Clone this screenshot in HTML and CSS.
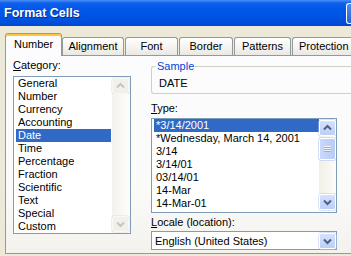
FILE: index.html
```html
<!DOCTYPE html>
<html>
<head>
<meta charset="utf-8">
<link rel="stylesheet" href="styles.css">
</head>
<body>
<div class="titlebar">
  <span class="title">Format Cells</span>
  <span class="tbtn"></span>
</div>
<div class="tabs">
  <div class="tab active" style="width:57px">Number</div>
  <div class="tab" style="width:62px">Alignment</div>
  <div class="tab" style="width:53px">Font</div>
  <div class="tab" style="width:54px">Border</div>
  <div class="tab" style="width:57px">Patterns</div>
  <div class="tab last" style="width:59px">Protection</div>
</div>
<div class="panel">
  <div class="col-left">
    <div class="label"><u>C</u>ategory:</div>
    <div class="list cat-list">
      <div class="items">
        <div class="item">General</div>
        <div class="item">Number</div>
        <div class="item">Currency</div>
        <div class="item">Accounting</div>
        <div class="item sel">Date</div>
        <div class="item">Time</div>
        <div class="item">Percentage</div>
        <div class="item">Fraction</div>
        <div class="item">Scientific</div>
        <div class="item">Text</div>
        <div class="item">Special</div>
        <div class="item">Custom</div>
      </div>
      <div class="sbar disabled">
        <div class="sbtn"><svg viewBox="0 0 17 16" width="17" height="16"><polyline points="5,9.5 8.5,6 12,9.5" fill="none" stroke="#C8C6B8" stroke-width="2"/></svg></div>
        <div class="strack"></div>
        <div class="sbtn"><svg viewBox="0 0 17 16" width="17" height="16"><polyline points="5,6.5 8.5,10 12,6.5" fill="none" stroke="#C8C6B8" stroke-width="2"/></svg></div>
      </div>
    </div>
  </div>
  <div class="col-right">
    <fieldset class="sample">
      <legend>Sample</legend>
      <div class="sample-val">DATE</div>
    </fieldset>
    <div class="label type-label"><u>T</u>ype:</div>
    <div class="list type-list">
      <div class="items">
        <div class="item sel">*3/14/2001</div>
        <div class="item">*Wednesday, March 14, 2001</div>
        <div class="item">3/14</div>
        <div class="item">3/14/01</div>
        <div class="item">03/14/01</div>
        <div class="item">14-Mar</div>
        <div class="item">14-Mar-01</div>
      </div>
      <div class="sbar">
        <div class="sbtn"><svg viewBox="0 0 17 16" width="17" height="16"><polyline points="5,9.5 8.5,6 12,9.5" fill="none" stroke="#4D6185" stroke-width="2"/></svg></div>
        <div class="strack">
          <div class="thumb">
            <svg viewBox="0 0 15 22" width="15" height="22"><g stroke-width="1"><line x1="4" y1="8.5" x2="11" y2="8.5" stroke="#EEF4FE"/><line x1="4" y1="9.5" x2="11" y2="9.5" stroke="#8CB0F8"/><line x1="4" y1="10.5" x2="11" y2="10.5" stroke="#EEF4FE"/><line x1="4" y1="11.5" x2="11" y2="11.5" stroke="#8CB0F8"/><line x1="4" y1="12.5" x2="11" y2="12.5" stroke="#EEF4FE"/><line x1="4" y1="13.5" x2="11" y2="13.5" stroke="#8CB0F8"/></g></svg>
          </div>
        </div>
        <div class="sbtn"><svg viewBox="0 0 17 16" width="17" height="16"><polyline points="5,6.5 8.5,10 12,6.5" fill="none" stroke="#4D6185" stroke-width="2"/></svg></div>
      </div>
    </div>
    <div class="label locale-label"><u>L</u>ocale (location):</div>
    <div class="combo">
      <div class="combo-text">English (United States)</div>
      <div class="sbtn combo-btn"><svg viewBox="0 0 17 16" width="17" height="16"><polyline points="5,6.5 8.5,10 12,6.5" fill="none" stroke="#4D6185" stroke-width="2"/></svg></div>
    </div>
  </div>
</div>
</body>
</html>
```
FILE: styles.css
```css
* { box-sizing: border-box; }
html, body {
  margin: 0;
  padding: 0;
}
body {
  width: 351px;
  height: 256px;
  overflow: hidden;
  background: #ECE9D8;
  font-family: "Liberation Sans", Arial, sans-serif;
  font-size: 11px;
  line-height: 13px;
  color: #000;
}
.titlebar {
  height: 26px;
  display: flex;
  align-items: center;
  justify-content: space-between;
  padding-left: 4px;
  background: linear-gradient(to bottom, #4A8EF6 0px, #0F61EC 3px, #0058E8 9px, #0054E3 16px, #004FDD 22px, #0046CF 26px);
}
.title {
  color: #fff;
  font-weight: bold;
  font-size: 12.5px;
  line-height: 15px;
  text-shadow: 1px 1px 0 #0A2A8A;
  margin-top: 1px;
}
.tbtn {
  width: 5px;
  height: 21px;
  border: 1px solid #fff;
  border-right: none;
  border-radius: 3px 0 0 3px;
  background: linear-gradient(#4E8AF0, #2A63DA);
}
.tabs {
  display: flex;
  align-items: flex-end;
  height: 30px;
  padding-top: 7px;
  padding-left: 5px;
  margin-bottom: -1px;
}
.tab {
  height: 18px;
  margin-bottom: 1px;
  margin-right: 1px;
  border: 1px solid #919B9C;
  border-bottom: none;
  border-radius: 3px 3px 0 0;
  background: linear-gradient(#FFFFFF, #F3F2EE 60%, #E9E8E2);
  text-align: center;
  line-height: 17px;
  flex-shrink: 0;
  white-space: nowrap;
}
.tab.last {
  margin-right: 0;
  border-right: none;
  border-top-right-radius: 0;
  text-align: left;
  padding-left: 6px;
}
.tab.active {
  position: relative;
  z-index: 1;
  height: 23px;
  margin-bottom: 0;
  margin-right: 0;
  border-top: 1px solid #E68B2C;
  box-shadow: inset 0 2px 0 #FFC73C;
  background: #FCFCFE;
  line-height: 21px;
  padding-bottom: 1px;
}
.panel {
  display: flex;
  margin-left: 5px;
  height: 199px;
  border: 1px solid #919B9C;
  border-right: none;
  background: linear-gradient(#FCFCFE, #FAFAF9 70%, #F3F2ED);
  padding: 3px 0 0 7px;
}
.col-left {
  width: 118px;
  margin-right: 20px;
  flex-shrink: 0;
}
.col-right {
  flex: 1;
  min-width: 0;
}
.label {
  height: 13px;
  white-space: nowrap;
}
.list {
  display: flex;
  border: 1px solid #7F9DB9;
  background: #fff;
  overflow: hidden;
}
.cat-list {
  margin-top: 4px;
  height: 158px;
  padding: 0 1px;
}
.items {
  flex: 1;
  overflow: hidden;
}
.item {
  height: 13px;
  margin-left: 1px;
  padding-left: 2px;
  white-space: nowrap;
}
.cat-list .item { margin-right: 1px; }
.item.sel {
  background: #316AC5;
  color: #fff;
}
.sbar {
  width: 17px;
  display: flex;
  flex-direction: column;
  flex-shrink: 0;
}
.cat-list .sbar { padding: 1px 0; }
.sbtn {
  width: 17px;
  height: 16px;
  border: 1px solid #fff;
  border-radius: 2px;
  background: linear-gradient(#D6E2FD, #BBCFF8);
  box-shadow: 0 0 0 0.5px #B3C6F2;
}
.sbtn svg {
  display: block;
  margin: -1px;
}
.strack {
  flex: 1;
  background: linear-gradient(to right, #F0EFE7, #FDFDFA);
}
.sbar.disabled .sbtn {
  background: #F1F0EA;
  border-color: #F9F8F4;
  box-shadow: 0 0 0 0.5px #E2E0D6;
}
.sbar.disabled .strack {
  background: linear-gradient(to right, #F3F2EC, #FDFDFB);
}
.thumb {
  width: 17px;
  height: 22px;
  margin-top: 2px;
  border: 1px solid #fff;
  border-radius: 2px;
  background: linear-gradient(to right, #C9D8FC, #B8CCF8);
  box-shadow: 0 0 0 0.5px #A9BFEE;
}
.thumb svg { display: block; margin: -1px 0 0 0; }
.sample {
  margin: 1px 0 0 0;
  padding: 0 0 3px 4px;
  border: 1px solid #D0D0BF;
  border-right: none;
  border-radius: 3px 0 0 3px;
  min-width: 0;
}
.sample legend {
  padding: 0 1px;
  color: #0046D5;
  line-height: 13px;
}
.sample-val {
  padding: 4px 0 0 3px;
  height: 17px;
}
.type-label { margin-top: 8px; }
.type-list {
  width: 186px;
  margin-top: 3px;
  height: 95px;
  padding-left: 1px;
}
.type-list .sbar { padding: 1px 0 2px; }
.locale-label { margin-top: 3px; }
.combo {
  width: 186px;
  margin-top: 2px;
  height: 19px;
  display: flex;
  align-items: center;
  border: 1px solid #7F9DB9;
  background: #fff;
  padding: 1px 0 1px 3px;
}
.combo-text {
  flex: 1;
  white-space: nowrap;
  padding-top: 1px;
}
.combo-btn {
  height: 16px;
  flex-shrink: 0;
}
```
